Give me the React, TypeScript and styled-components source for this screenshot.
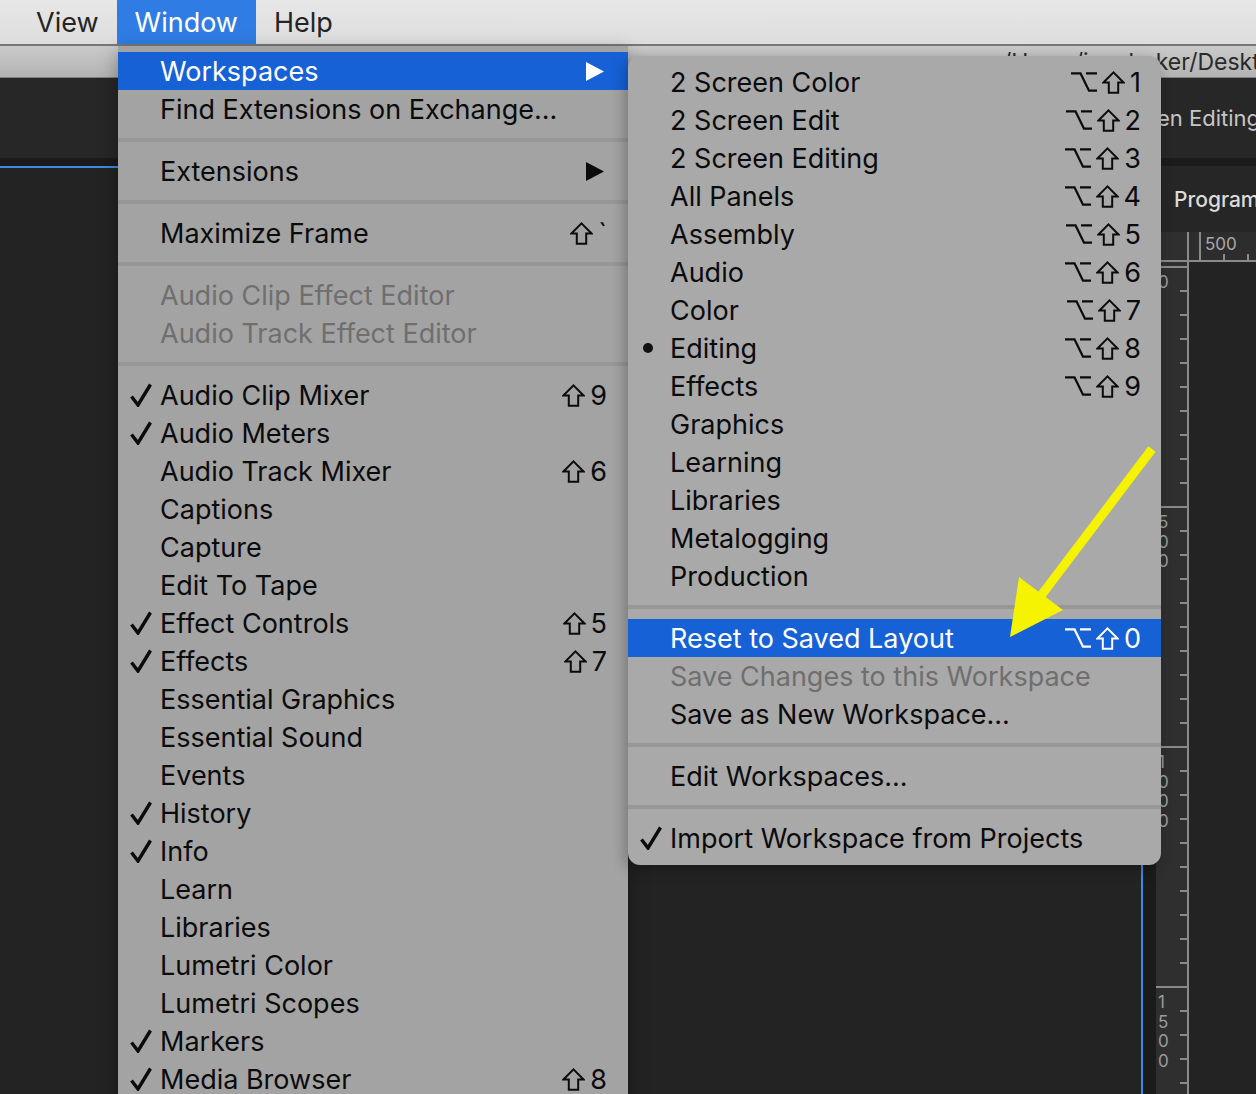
import React from "react";
import styled, { createGlobalStyle } from "styled-components";

const Global = createGlobalStyle`
  html, body { margin: 0; padding: 0; background: #1b1b1b; }
  body { font-family: Inter, "Liberation Sans", "DejaVu Sans", sans-serif; overflow: hidden; }
  * { box-sizing: border-box; }
`;

const Screen = styled.div`
  position: relative;
  width: 1256px;
  height: 1094px;
  overflow: hidden;
  display: flex;
  flex-direction: column;
  background: #1b1b1b;
`;

/* ---------- system menu bar ---------- */
const MenuBar = styled.div`
  flex: none;
  height: 46px;
  display: flex;
  align-items: stretch;
  padding-left: 18px;
  background: linear-gradient(#e7e7e7, #dddddd);
  border-bottom: 2px solid #777;
`;

const MenuTitle = styled.div<{ $active?: boolean }>`
  display: flex;
  align-items: center;
  padding: 0 18px;
  font-size: 27px;
  color: ${(p) => (p.$active ? "#fff" : "#242424")};
  background: ${(p) => (p.$active ? "#2f7de4" : "transparent")};
`;

/* ---------- app window behind menus ---------- */
const TitleBar = styled.div`
  flex: none;
  height: 32px;
  display: flex;
  align-items: center;
  padding-left: 1003px;
  background: linear-gradient(#cacaca, #b3b3b3);
  border-bottom: 1px solid #7d7d7d;
  white-space: nowrap;
  font-size: 23px;
  color: #2a2a2a;
`;

const WorkspaceBar = styled.div`
  flex: none;
  height: 80px;
  display: flex;
  align-items: center;
  padding-left: 1090px;
  background: #272727;
  white-space: nowrap;
`;

const WorkspaceTab = styled.span`
  font-size: 22px;
  color: #c6c6c6;
`;

const Panels = styled.div`
  flex: 1;
  display: flex;
  padding-top: 8px;
  background: #1b1b1b;
  min-height: 0;
`;

const SourcePanel = styled.div`
  flex: none;
  width: 1143px;
  background: #232323;
  border-top: 2px solid #3a8de4;
  border-right: 2px solid #3a8de4;
`;

const Gutter = styled.div`
  flex: none;
  width: 13px;
`;

const ProgramPanel = styled.div`
  flex: 1;
  display: flex;
  flex-direction: column;
  min-width: 0;
`;

const PanelHeader = styled.div`
  flex: none;
  height: 66px;
  display: flex;
  align-items: center;
  padding-left: 18px;
  background: #262626;
  font-size: 21px;
  font-weight: 500;
  color: #dcdcdc;
  white-space: nowrap;
`;

const RulerGrid = styled.div`
  flex: 1;
  display: grid;
  grid-template-columns: 33px 1fr;
  grid-template-rows: 30px 1fr;
  background: #232323;
`;

const RulerCorner = styled.div`
  background: #2f2f2f;
  border-right: 2px solid #8a8a8a;
  border-bottom: 2px solid #8a8a8a;
`;

const HRuler = styled.div`
  display: flex;
  padding-left: 10px;
  background: #2d2d2d;
  border-bottom: 2px solid #8a8a8a;
`;

const HSegment = styled.div`
  flex: none;
  width: 240px;
  border-left: 2px solid #8a8a8a;
  padding: 2px 0 0 4px;
  font-size: 17px;
  color: #a8a8a8;
  background: repeating-linear-gradient(
      to right,
      transparent 0,
      transparent 22px,
      #8a8a8a 22px,
      #8a8a8a 24px
    )
    left bottom / 100% 6px no-repeat;
`;

const VRuler = styled.div`
  display: flex;
  flex-direction: column;
  padding-top: 4px;
  background: #2f2f2f;
  border-right: 2px solid #8a8a8a;
  overflow: hidden;
`;

const VSegment = styled.div`
  flex: none;
  height: 240px;
  border-top: 2px solid #8a8a8a;
  padding: 5px 0 0 2px;
  display: flex;
  flex-direction: column;
  font-size: 17px;
  line-height: 19.5px;
  color: #9c9c9c;
  background: repeating-linear-gradient(
      to bottom,
      transparent 0,
      transparent 22px,
      #8a8a8a 22px,
      #8a8a8a 24px
    )
    right top / 7px 100% no-repeat;
`;

const Canvas = styled.div`
  background: #232323;
`;

/* ---------- drop-down menus ---------- */
const WindowMenu = styled.div`
  position: absolute;
  top: 46px;
  left: 118px;
  width: 510px;
  height: 1060px;
  padding-top: 6px;
  background: #a3a3a3;
  box-shadow: 0 6px 18px rgba(0, 0, 0, 0.35);
  z-index: 2;
`;

const SubMenu = styled.div`
  position: absolute;
  top: 56px;
  left: 628px;
  width: 533px;
  padding: 7px 0 8px;
  background: #a9a9a9;
  border-radius: 12px;
  box-shadow: -3px 4px 14px rgba(0, 0, 0, 0.28);
  z-index: 3;
`;

const Row = styled.div<{ $active?: boolean; $disabled?: boolean; $right: number }>`
  height: 38px;
  display: flex;
  align-items: center;
  padding: 0 ${(p) => p.$right}px 0 12px;
  font-size: 27px;
  white-space: nowrap;
  background: ${(p) => (p.$active ? "#1661d6" : "transparent")};
  color: ${(p) => (p.$active ? "#ffffff" : p.$disabled ? "#6f6f6f" : "#0b0b0b")};
`;

const Mark = styled.span`
  flex: none;
  width: 31px;
  display: flex;
  align-items: center;
`;

const Bullet = styled.span`
  width: 10px;
  height: 10px;
  margin-left: 3px;
  border-radius: 50%;
  background: #111;
`;

const Label = styled.span`
  flex: 1;
  margin-left: -1px;
`;

const Keys = styled.span`
  display: flex;
  align-items: center;
  gap: 5px;
`;

const Separator = styled.div`
  height: 24px;
  display: flex;
  align-items: center;
  &::after {
    content: "";
    flex: 1;
    height: 4px;
    background: #979797;
  }
`;

const ArrowOverlay = styled.svg`
  position: absolute;
  left: 1000px;
  top: 440px;
  z-index: 5;
  pointer-events: none;
`;

/* ---------- icons ---------- */
const Check = () => (
  <svg width="22" height="24" viewBox="0 0 22 24">
    <path d="M1.5 13.5 L8 22 L20.5 1.5" fill="none" stroke="currentColor" strokeWidth="3.4" strokeLinejoin="miter" />
  </svg>
);

const ShiftKey = () => (
  <svg width="23" height="23" viewBox="0 0 23 23">
    <path d="M11.5 1.4 L21.6 11.5 L16.2 11.5 L16.2 21.8 L6.8 21.8 L6.8 11.5 L1.4 11.5 Z" fill="none" stroke="currentColor" strokeWidth="2" strokeLinejoin="miter" />
  </svg>
);

const OptionKey = () => (
  <svg width="26" height="20" viewBox="0 0 26 20">
    <path d="M0 1.3 H9.5 L18 18.7 H26 M15 1.3 H26" fill="none" stroke="currentColor" strokeWidth="2.3" />
  </svg>
);

const SubArrow = () => (
  <svg width="18" height="19" viewBox="0 0 18 19" style={{ marginRight: 3 }}>
    <polygon points="0,0 18,9.5 0,19" fill="currentColor" />
  </svg>
);

/* ---------- data ---------- */
type Entry = {
  label: string;
  active?: boolean;
  disabled?: boolean;
  checked?: boolean;
  bullet?: boolean;
  sub?: boolean;
  option?: boolean;
  shift?: boolean;
  key?: string;
};
type Item = "sep" | Entry;

const windowItems: Item[] = [
  { label: "Workspaces", active: true, sub: true },
  { label: "Find Extensions on Exchange..." },
  "sep",
  { label: "Extensions", sub: true },
  "sep",
  { label: "Maximize Frame", shift: true, key: "`" },
  "sep",
  { label: "Audio Clip Effect Editor", disabled: true },
  { label: "Audio Track Effect Editor", disabled: true },
  "sep",
  { label: "Audio Clip Mixer", checked: true, shift: true, key: "9" },
  { label: "Audio Meters", checked: true },
  { label: "Audio Track Mixer", shift: true, key: "6" },
  { label: "Captions" },
  { label: "Capture" },
  { label: "Edit To Tape" },
  { label: "Effect Controls", checked: true, shift: true, key: "5" },
  { label: "Effects", checked: true, shift: true, key: "7" },
  { label: "Essential Graphics" },
  { label: "Essential Sound" },
  { label: "Events" },
  { label: "History", checked: true },
  { label: "Info", checked: true },
  { label: "Learn" },
  { label: "Libraries" },
  { label: "Lumetri Color" },
  { label: "Lumetri Scopes" },
  { label: "Markers", checked: true },
  { label: "Media Browser", checked: true, shift: true, key: "8" },
  { label: "Metadata" },
];

const ws = (label: string, n?: string, extra: Partial<Entry> = {}): Item => ({
  label,
  ...(n ? { option: true, shift: true, key: n } : {}),
  ...extra,
});

const workspaceItems: Item[] = [
  ws("2 Screen Color", "1"),
  ws("2 Screen Edit", "2"),
  ws("2 Screen Editing", "3"),
  ws("All Panels", "4"),
  ws("Assembly", "5"),
  ws("Audio", "6"),
  ws("Color", "7"),
  ws("Editing", "8", { bullet: true }),
  ws("Effects", "9"),
  ws("Graphics"),
  ws("Learning"),
  ws("Libraries"),
  ws("Metalogging"),
  ws("Production"),
  "sep",
  ws("Reset to Saved Layout", "0", { active: true }),
  ws("Save Changes to this Workspace", undefined, { disabled: true }),
  ws("Save as New Workspace..."),
  "sep",
  ws("Edit Workspaces..."),
  "sep",
  ws("Import Workspace from Projects", undefined, { checked: true }),
];

const MenuRows = ({ items, right }: { items: Item[]; right: number }) => (
  <>
    {items.map((it, i) =>
      it === "sep" ? (
        <Separator key={i} />
      ) : (
        <Row key={i} $active={it.active} $disabled={it.disabled} $right={right}>
          <Mark>{it.checked ? <Check /> : it.bullet ? <Bullet /> : null}</Mark>
          <Label>{it.label}</Label>
          {it.sub ? (
            <SubArrow />
          ) : it.key ? (
            <Keys>
              {it.option && <OptionKey />}
              {it.shift && <ShiftKey />}
              <span>{it.key}</span>
            </Keys>
          ) : null}
        </Row>
      )
    )}
  </>
);

const vLabels = ["0", "500", "1000", "1500", "2000"];

export default function App() {
  return (
    <>
      <Global />
      <Screen>
        <MenuBar>
          <MenuTitle>View</MenuTitle>
          <MenuTitle $active>Window</MenuTitle>
          <MenuTitle>Help</MenuTitle>
        </MenuBar>
        <TitleBar>/Users/janebaker/Desktop/Premiere Project.prproj</TitleBar>
        <WorkspaceBar>
          <WorkspaceTab>2 Screen Editing</WorkspaceTab>
        </WorkspaceBar>
        <Panels>
          <SourcePanel />
          <Gutter />
          <ProgramPanel>
            <PanelHeader>Program</PanelHeader>
            <RulerGrid>
              <RulerCorner />
              <HRuler>
                <HSegment>500</HSegment>
              </HRuler>
              <VRuler>
                {vLabels.map((l) => (
                  <VSegment key={l}>
                    {l.split("").map((d, i) => (
                      <span key={i}>{d}</span>
                    ))}
                  </VSegment>
                ))}
              </VRuler>
              <Canvas />
            </RulerGrid>
          </ProgramPanel>
        </Panels>

        <WindowMenu>
          <MenuRows items={windowItems} right={21} />
        </WindowMenu>
        <SubMenu>
          <MenuRows items={workspaceItems} right={20} />
        </SubMenu>

        <ArrowOverlay width="160" height="210" viewBox="1000 440 160 210">
          <line x1="1152" y1="449" x2="1040" y2="597" stroke="#f6f300" strokeWidth="9" />
          <polygon points="1010,637 1019,577 1063,610" fill="#f6f300" />
        </ArrowOverlay>
      </Screen>
    </>
  );
}
